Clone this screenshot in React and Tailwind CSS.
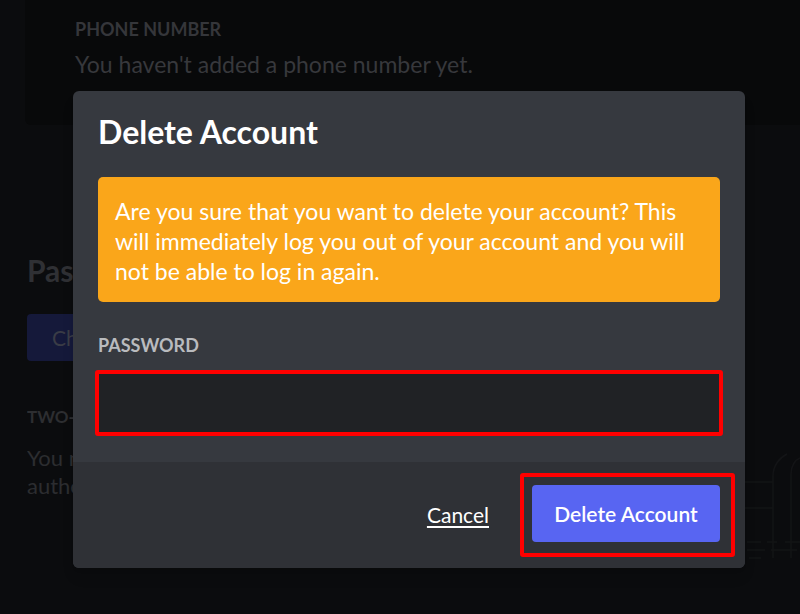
import { useState } from 'react'

const font = { fontFamily: 'Lato, "Open Sans", "Liberation Sans", sans-serif' }

function Backdrop() {
  return (
    <div className="flex flex-col h-full">
      <div className="ml-[25px] h-[125px] bg-[#08090a] rounded-bl-md pl-[50px] pt-[18px]">
        <div className="text-[18px] font-bold leading-[22px] text-[#35363a]">PHONE NUMBER</div>
        <div className="mt-[10px] text-[23px] leading-[28px] text-[#37383c]">You haven't added a phone number yet.</div>
      </div>
      {/* left column, mostly hidden behind the modal */}
      <div className="ml-[27px] pt-[128px] w-[46px] overflow-hidden whitespace-nowrap">
        <div className="text-[30px] font-bold leading-[34px] text-[#2f3034]">Password</div>
        <div className="mt-[27px] h-[47px] w-[190px] rounded bg-[#15193a] flex items-center pl-[25px] text-[21px] text-[#3a3c46]">Change</div>
        <div className="mt-[46px] text-[17px] font-bold leading-[20px] text-[#2d2e31]">TWO-FACTOR</div>
        <div className="mt-[17px] text-[22px] leading-[28px] text-[#2c2d30]">You must</div>
        <div className="text-[22px] leading-[28px] text-[#2c2d30]">authentication</div>
      </div>
    </div>
  )
}

function Sketch() {
  return (
    <svg width="55" height="130" viewBox="0 0 55 130" fill="none" stroke="#131416" strokeWidth="1.5">
      <path d="M28 120V38c0-10 6-18 14-22" />
      <path d="M46 120V36c0-8 4-14 9-16" />
      <path d="M0 44h28M0 70h28" />
      <path d="M2 104h14M22 104h10M40 104h15M2 112h18M26 112h26M4 120h12" />
    </svg>
  )
}

export default function App() {
  const [password, setPassword] = useState('')

  return (
    <div className="relative w-[800px] h-[614px] overflow-hidden bg-[#0b0c0e]" style={font}>
      <Backdrop />
      <div className="absolute left-[745px] top-[438px]">
        <Sketch />
      </div>

      <div className="absolute left-[73px] top-[91px] w-[672px] rounded-md overflow-hidden bg-[#36393f] shadow-lg">
        <div className="px-[25px] pt-[23px] pb-[26px]">
          <h2 className="text-[32px] font-bold leading-[36px] text-white">Delete Account</h2>
          <div className="mt-[27px] rounded-[5px] bg-[#faa61a] px-[17px] pt-[19px] pb-[16px] text-[23px] leading-[30px] text-white">
            Are you sure that you want to delete your account? This will immediately log you out of your account and you will not be able to log in again.
          </div>
          <label className="block mt-[33px] text-[18px] font-bold leading-[20px] text-[#b9bbbe]">PASSWORD</label>
          <div className="mt-[15px] -mx-[3px] rounded-[3px] border-[4px] border-[#ff0000]">
            <input
              type="password"
              value={password}
              onChange={e => setPassword(e.target.value)}
              className="block w-full h-[58px] bg-[#202225] outline-none px-3 text-white"
            />
          </div>
        </div>
        <div className="h-[106px] bg-[#2f3136] flex items-center justify-end pr-[10px] gap-[31px]">
          <button className="text-[21px] text-white underline underline-offset-[3px]">Cancel</button>
          <div className="pl-[8px] pt-[8px] pr-[11px] pb-[11px] border-[4px] border-[#ff0000] rounded-[3px]">
            <button className="h-[57px] w-[188px] rounded-[4px] bg-[#5865f2] text-[21px] font-semibold text-white">
              Delete Account
            </button>
          </div>
        </div>
      </div>
    </div>
  )
}
